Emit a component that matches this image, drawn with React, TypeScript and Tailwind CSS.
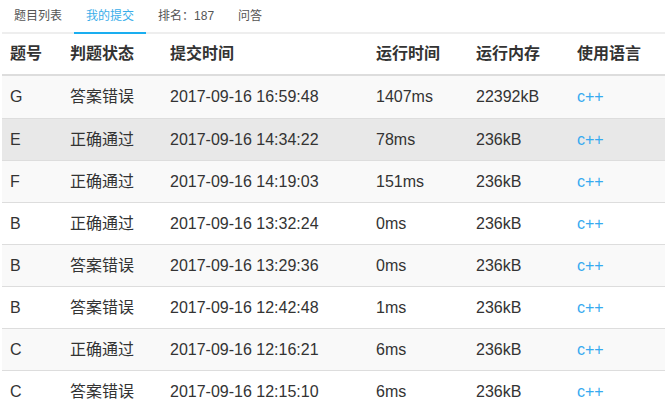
import React from "react";

const rows = [
  ["G", "答案错误", "2017-09-16 16:59:48", "1407ms", "22392kB"],
  ["E", "正确通过", "2017-09-16 14:34:22", "78ms", "236kB"],
  ["F", "正确通过", "2017-09-16 14:19:03", "151ms", "236kB"],
  ["B", "正确通过", "2017-09-16 13:32:24", "0ms", "236kB"],
  ["B", "答案错误", "2017-09-16 13:29:36", "0ms", "236kB"],
  ["B", "答案错误", "2017-09-16 12:42:48", "1ms", "236kB"],
  ["C", "正确通过", "2017-09-16 12:16:21", "6ms", "236kB"],
  ["C", "答案错误", "2017-09-16 12:15:10", "6ms", "236kB"],
];

const grid = "grid grid-cols-[60px_100px_206px_100px_101px_1fr] items-center";

export default function App() {
  return (
    <div
      className="w-[665px] h-[413px] overflow-hidden bg-white text-[#333]"
      style={{ fontFamily: '"Liberation Sans", Arial, "Noto Sans CJK SC", sans-serif' }}
    >
      <div className="ml-[2px]">
        <div className="flex h-[34px] border-b-2 border-[#eeeeee] text-[12px]">
          <div className="px-3 flex items-center text-[#555]">题目列表</div>
          <div className="px-3 flex items-center text-[#3aaeea] border-b-2 border-[#1aaef0] -mb-[2px]">我的提交</div>
          <div className="px-3 flex items-center text-[#555]">排名：187</div>
          <div className="px-3 flex items-center text-[#555]">问答</div>
        </div>
        <div className={`${grid} h-[42px] border-b-2 border-[#dddddd] text-[16px] font-bold`}>
          <div className="pl-2">题号</div>
          <div className="pl-2">判题状态</div>
          <div className="pl-2">提交时间</div>
          <div className="pl-2">运行时间</div>
          <div className="pl-2">运行内存</div>
          <div className="pl-2">使用语言</div>
        </div>
        {rows.map((r, i) => {
          const bg = i === 1 ? "bg-[#e8e8e8]" : i % 2 === 0 ? "bg-[#f9f9f9]" : "bg-white";
          return (
            <div
              key={i}
              className={`${grid} h-[42px] text-[16px] ${bg} ${i === 0 ? "" : "border-t border-[#dddddd]"}`}
            >
              <div className="pl-2">{r[0]}</div>
              <div className="pl-2">{r[1]}</div>
              <div className="pl-2">{r[2]}</div>
              <div className="pl-2">{r[3]}</div>
              <div className="pl-2">{r[4]}</div>
              <div className="pl-2 text-[#36aaf0]">c++</div>
            </div>
          );
        })}
      </div>
    </div>
  );
}
